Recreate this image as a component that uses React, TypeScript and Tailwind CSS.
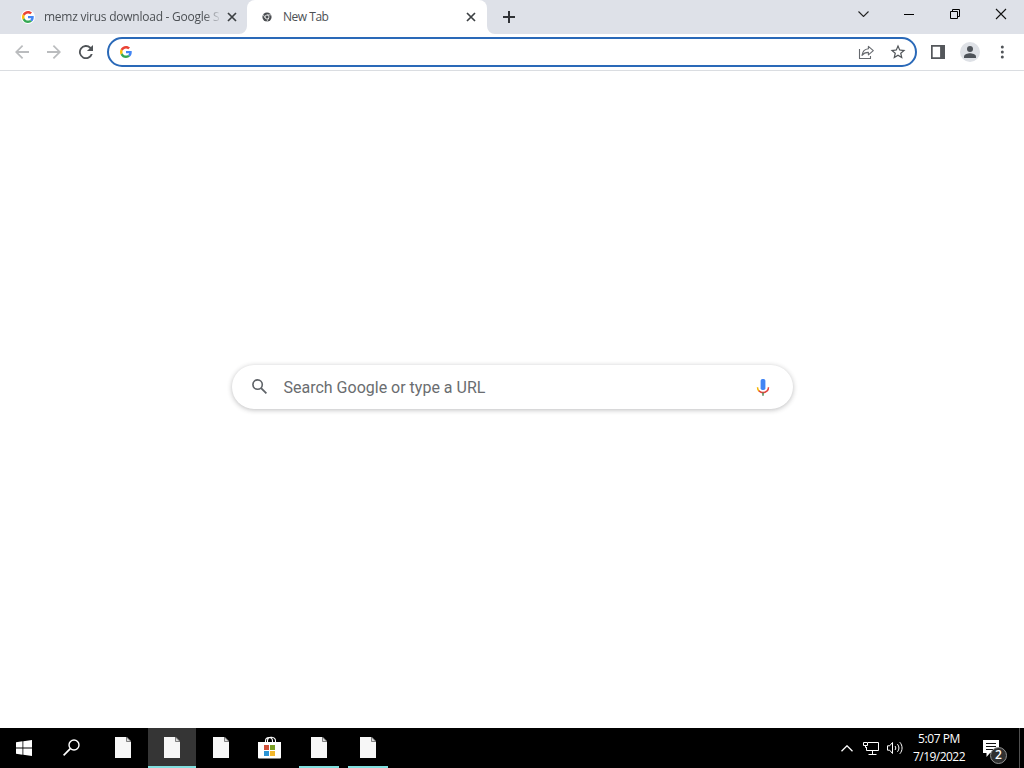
import type { ReactNode } from "react";
import clsx from "clsx";

function GoogleG({ className }: { className?: string }) {
  return (
    <svg viewBox="0 0 48 48" className={clsx("shrink-0", className)}>
      <path fill="#EA4335" d="M24 9.5c3.54 0 6.71 1.22 9.21 3.6l6.85-6.85C35.9 2.38 30.47 0 24 0 14.62 0 6.51 5.38 2.56 13.22l7.98 6.19C12.43 13.72 17.74 9.5 24 9.5z" />
      <path fill="#4285F4" d="M46.98 24.55c0-1.57-.15-3.09-.38-4.55H24v9.02h12.94c-.58 2.96-2.26 5.48-4.78 7.18l7.73 6c4.51-4.18 7.09-10.36 7.09-17.65z" />
      <path fill="#FBBC05" d="M10.53 28.59c-.48-1.45-.76-2.99-.76-4.59s.27-3.14.76-4.59l-7.98-6.19C.92 16.46 0 20.12 0 24c0 3.88.92 7.54 2.56 10.78l7.97-6.19z" />
      <path fill="#34A853" d="M24 48c6.48 0 11.93-2.13 15.89-5.81l-7.73-6c-2.15 1.45-4.92 2.3-8.16 2.3-6.26 0-11.57-4.22-13.47-9.91l-7.98 6.19C6.51 42.62 14.62 48 24 48z" />
    </svg>
  );
}

function TabClose() {
  return (
    <svg viewBox="0 0 8 8" className="size-2 shrink-0 overflow-visible" stroke="#3c4043" strokeWidth="1.7">
      <path d="M0 0 8 8M8 0 0 8" />
    </svg>
  );
}

function FileIcon() {
  return (
    <svg viewBox="0 0 16 21" className="h-[21px] w-4">
      <path fill="#f7f7f7" d="M0 0h11.5L16 4.5V21H0z" />
      <path fill="#dcdcdc" stroke="#666" strokeWidth=".8" d="M11.5 0v4.5H16z" />
    </svg>
  );
}

function StoreIcon() {
  return (
    <svg viewBox="0 0 23 24" className="h-6 w-[23px]">
      <path fill="none" stroke="#fff" strokeWidth="1.1" d="M7.5 7V5c0-4.6 7-4.6 7 0v2M9.5 7V4.2c.6-4.4 8-3.6 8 .8v2" />
      <path fill="#fff" d="M0 6h23v15.5a1 1 0 0 1-1 1H1a1 1 0 0 1-1-1z" />
      <path fill="#d1503a" d="M6 9h5v5H6z" />
      <path fill="#7a9f24" d="M12 9h5v5h-5z" />
      <path fill="#2b95d6" d="M6 15h5v5H6z" />
      <path fill="#f3b72b" d="M12 15h5v5h-5z" />
    </svg>
  );
}

function TabStrip() {
  return (
    <div className="flex h-[34px] bg-[#dee1e8] text-[12px] text-[#4c5054]">
      <div className="flex w-[247px] items-center pl-[21px] pr-[11px]">
        <div className="flex size-[14px] items-center justify-center rounded-full bg-white">
          <GoogleG className="size-3" />
        </div>
        <span className="ml-[9px] w-[176px] overflow-hidden whitespace-nowrap tracking-[-0.02em] [mask-image:linear-gradient(to_right,black_160px,transparent_178px)]">
          memz virus download - Google S
        </span>
        <span className="ml-auto">
          <TabClose />
        </span>
      </div>

      {/* Active tab, flared into the toolbar at the bottom */}
      <div className="relative flex w-60 items-center rounded-t-lg bg-white pl-[15px] pr-[12px]">
        <svg viewBox="0 0 8 8" className="absolute bottom-0 -left-2 size-2" fill="#fff">
          <path d="M8 0v8H0a8 8 0 0 0 8-8z" />
        </svg>
        <svg viewBox="0 0 8 8" className="absolute bottom-0 -right-2 size-2" fill="#fff">
          <path d="M0 0v8h8a8 8 0 0 1-8-8z" />
        </svg>
        <svg viewBox="0 0 10 10" className="size-[10px]">
          <circle cx="5" cy="5" r="4.6" fill="#4a4d51" />
          <circle cx="5" cy="5" r="2" fill="#4a4d51" stroke="#fff" strokeWidth=".8" />
          <path d="M5 2.9h4.2M3.2 6 1.2 2.6M6.8 6 4.8 9.5" stroke="#fff" strokeWidth=".7" />
        </svg>
        <span className="ml-[11px] tracking-[-0.04em]">New Tab</span>
        <span className="ml-auto">
          <TabClose />
        </span>
      </div>

      <svg viewBox="0 0 12 12" className="mt-[11px] ml-4 size-3" stroke="#303236" strokeWidth="2">
        <path d="M6 0v12M0 6h12" />
      </svg>

      <div className="ml-auto flex">
        <div className="flex w-[46px] justify-center pt-[11px]">
          <svg viewBox="0 0 11 6" className="h-[6px] w-[11px]" fill="none" stroke="#222" strokeWidth="1.1">
            <path d="m.5.5 5 5 5-5" />
          </svg>
        </div>
        <div className="flex w-[46px] justify-center pt-[14px]">
          <div className="h-px w-[10px] bg-black" />
        </div>
        <div className="flex w-[46px] justify-center pt-[9px]">
          <svg viewBox="0 0 10 10" className="size-[10px]" fill="none" stroke="#000">
            <path d="M.5 2.5h7v7h-7zM2.5 2.5v-2h7v7h-2" />
          </svg>
        </div>
        <div className="flex w-[46px] justify-center pt-[9px]">
          <svg viewBox="0 0 10 10" className="size-[10px] overflow-visible" stroke="#111" strokeWidth="1.1">
            <path d="m0 0 10 10M10 0 0 10" />
          </svg>
        </div>
      </div>
    </div>
  );
}

function Toolbar() {
  return (
    <div className="flex h-[37px] items-center border-b border-[#dadde1] bg-white">
      <div className="flex w-[107px] gap-4 pl-[14px]">
        <svg viewBox="0 0 16 16" className="size-4" fill="#babcbe">
          <path d="M15 7.1H4.4l4.8-4.8L8 1 1 8l7 7 1.2-1.2-4.8-4.9H15z" />
        </svg>
        <svg viewBox="0 0 16 16" className="size-4" fill="#babcbe">
          <path d="M1 7.1h10.6L6.8 2.3 8 1l7 7-7 7-1.2-1.2 4.8-4.9H1z" />
        </svg>
        <svg viewBox="0 0 16 16" className="size-4" fill="#505458">
          <path d="M12.9 3.1A7 7 0 1 0 14.7 10h-1.9A5.2 5.2 0 1 1 11.6 4.4L8.9 7.1H15V1z" />
        </svg>
      </div>

      <div className="flex h-[30px] w-[810px] items-center rounded-full border-2 border-[#2a69b8] pl-[11px] pr-2">
        <GoogleG className="size-3" />
        <svg viewBox="0 0 16 16" className="ml-auto size-4" fill="none" stroke="#66696e" strokeWidth="1.1" strokeLinejoin="round">
          <path d="M1.5 5v9.5h11V12" />
          <path d="M10.4 2.3 15.3 6.6 10.4 10.8V8.4C7.4 8.3 5.6 9.3 4 11.4 4.5 7.4 6.8 5 10.4 4.7z" />
        </svg>
        <svg viewBox="0 0 24 24" className="ml-[15px] size-[18px]" fill="#505458">
          <path d="m22 9.24-7.19-.62L12 2 9.19 8.63 2 9.24l5.46 4.73L5.82 21 12 17.27 18.18 21l-1.63-7.03L22 9.24zM12 15.4l-3.76 2.27 1-4.28-3.32-2.88 4.38-.38L12 6.1l1.71 4.04 4.38.38-3.32 2.88 1 4.28L12 15.4z" />
        </svg>
      </div>

      <svg viewBox="0 0 14 14" className="ml-[14px] h-[14px] w-[14px]">
        <path fill="#54575b" fillRule="evenodd" d="M0 0h14v14H0zM1.7 1.7v10.6h7.4V1.7z" />
      </svg>
      <div className="ml-[15px] flex size-5 items-center justify-center rounded-full bg-[#dee1e6]">
        <svg viewBox="0 0 12 12" className="size-3" fill="#4e5359">
          <circle cx="6" cy="3" r="3" />
          <path d="M0 12v-1.6C0 8.2 4 7.2 6 7.2s6 1 6 3.2V12z" />
        </svg>
      </div>
      <svg viewBox="0 0 4 14" className="ml-5 h-[14px] w-1" fill="#505458">
        <circle cx="2.3" cy="2" r="1.5" />
        <circle cx="2.3" cy="7" r="1.5" />
        <circle cx="2.3" cy="12" r="1.5" />
      </svg>
    </div>
  );
}

function NewTabPage() {
  return (
    <main className="flex flex-1 justify-center bg-white pt-[294px]">
      <div className="flex h-11 w-[561px] items-center rounded-full bg-white pl-[20px] pr-[23px] shadow-[0_1px_5px_rgba(32,33,36,0.3)]">
        <svg viewBox="0 0 15 15" className="mb-px size-[15px]" fill="none" stroke="#5f6368" strokeWidth="1.6">
          <circle cx="5.6" cy="5.6" r="4.7" />
          <path d="m9.1 9.1 5.3 5.3" strokeWidth="1.8" />
        </svg>
        <span className="ml-[17px] pt-[2px] font-[Roboto,sans-serif] text-[16px] text-[#6a6d70]">
          Search Google or type a URL
        </span>
        <svg viewBox="0 0 14 18" className="ml-auto h-[18px] w-[14px]">
          <rect x="4.6" y="1" width="4.8" height="11" rx="1.8" fill="#4285f4" />
          <path d="M1.5 9.2c0 1.8.6 3 1.7 3.9" fill="none" stroke="#f4b400" strokeWidth="1.5" />
          <path d="M2.9 12.9c2.5 2.1 5.7 2.1 8.2 0 1-1 1.4-2.2 1.4-3.7" fill="none" stroke="#e2433a" strokeWidth="1.5" />
          <path d="M7 14.6v3.1" stroke="#4f8a55" strokeWidth="1.5" />
        </svg>
      </div>
    </main>
  );
}

function TaskButton({ active, running, children }: { active?: boolean; running?: boolean; children: ReactNode }) {
  return (
    <div className={clsx("flex h-10 w-12 flex-col items-center", active && "bg-[#353535]")}>
      <div className="flex h-[38px] items-center pt-px pr-px">{children}</div>
      {active && <div className="h-[2px] w-12 bg-[#81dfdf]" />}
      {running && <div className="h-[2px] w-10 bg-[#81dfdf]" />}
    </div>
  );
}

function Taskbar() {
  return (
    <footer className="flex h-10 bg-black text-white">
      <div className="flex w-12 items-center justify-center">
        <svg viewBox="0 0 16 16" className="size-4" fill="#fff">
          <path d="M0 2.2 6.5 1.3v6.2H0zM7.3 1.2 16 0v7.5H7.3zM0 8.4h6.5v6.3L0 13.8zM7.3 8.4H16V16l-8.7-1.2z" />
        </svg>
      </div>
      <div className="flex w-[51px] justify-center pt-[11px] pr-[4px]">
        <svg viewBox="0 0 17 17" className="size-[17px]" fill="none" stroke="#fff" strokeWidth="1.4">
          <circle cx="11" cy="6" r="5" />
          <path d="M7.3 9.6.6 16.3" strokeWidth="1.7" />
        </svg>
      </div>

      <div className="flex gap-px">
        <TaskButton>
          <FileIcon />
        </TaskButton>
        <TaskButton active>
          <FileIcon />
        </TaskButton>
        <TaskButton>
          <FileIcon />
        </TaskButton>
        <TaskButton>
          <StoreIcon />
        </TaskButton>
        <TaskButton running>
          <FileIcon />
        </TaskButton>
        <TaskButton running>
          <FileIcon />
        </TaskButton>
      </div>

      {/* Tray */}
      <div className="ml-auto flex items-center">
        <svg viewBox="0 0 12 7" className="h-[7px] w-3" fill="none" stroke="#fff" strokeWidth="1.3">
          <path d="m.5 6.3 5.5-5.5 5.5 5.5" />
        </svg>
        <svg viewBox="0 0 17 14" className="ml-[10px] h-[14px] w-[17px]" fill="none" stroke="#fff">
          <path d="M5 1.5h10.5v8h-12V6M9.5 9.5v4M5.5 13.5h8M.5 1.5h4v3h-4zM2.5 4.5v2h1" />
        </svg>
        <svg viewBox="0 0 17 14" className="ml-[7px] h-[14px] w-[17px]" fill="none" stroke="#fff">
          <path d="M.5 4.8h2.2L5.5 1.5v11L2.7 9.2H.5z" />
          <path d="M8 5c1 1.2 1 2.8 0 4M10.4 3.2c2 2.3 2 5.3 0 7.6M12.8 1.2c3 3.4 3 8.2 0 11.6" />
        </svg>
        <div className="ml-[8px] flex w-[54px] flex-col items-center whitespace-nowrap text-[12px] leading-[18px]">
          <span className="tracking-[-0.035em]">5:07 PM</span>
          <span className="tracking-[-0.045em]">7/19/2022</span>
        </div>
        <div className="relative ml-[17px] h-[17px] w-4">
          <svg viewBox="0 0 16 17" className="h-[17px] w-4">
            <path fill="#fff" d="M0 0h16v13H7l-3.5 4v-4H0z" />
            <path stroke="#111" strokeWidth="1.2" d="M3 3.5h10M3 6.5h10M3 9.5h7" />
          </svg>
          <span className="absolute top-[7px] left-[7px] flex size-[17px] items-center justify-center rounded-full border border-[#929292] bg-[#303030] text-[12px] leading-none font-semibold">
            2
          </span>
        </div>
        <div className="ml-5 h-10 w-px bg-[#505050]" />
        <div className="w-1" />
      </div>
    </footer>
  );
}

export default function App() {
  return (
    <div className="flex h-[768px] w-[1024px] flex-col overflow-hidden bg-white font-['Open_Sans','Noto_Sans',sans-serif]">
      <TabStrip />
      <Toolbar />
      <NewTabPage />
      <Taskbar />
    </div>
  );
}
